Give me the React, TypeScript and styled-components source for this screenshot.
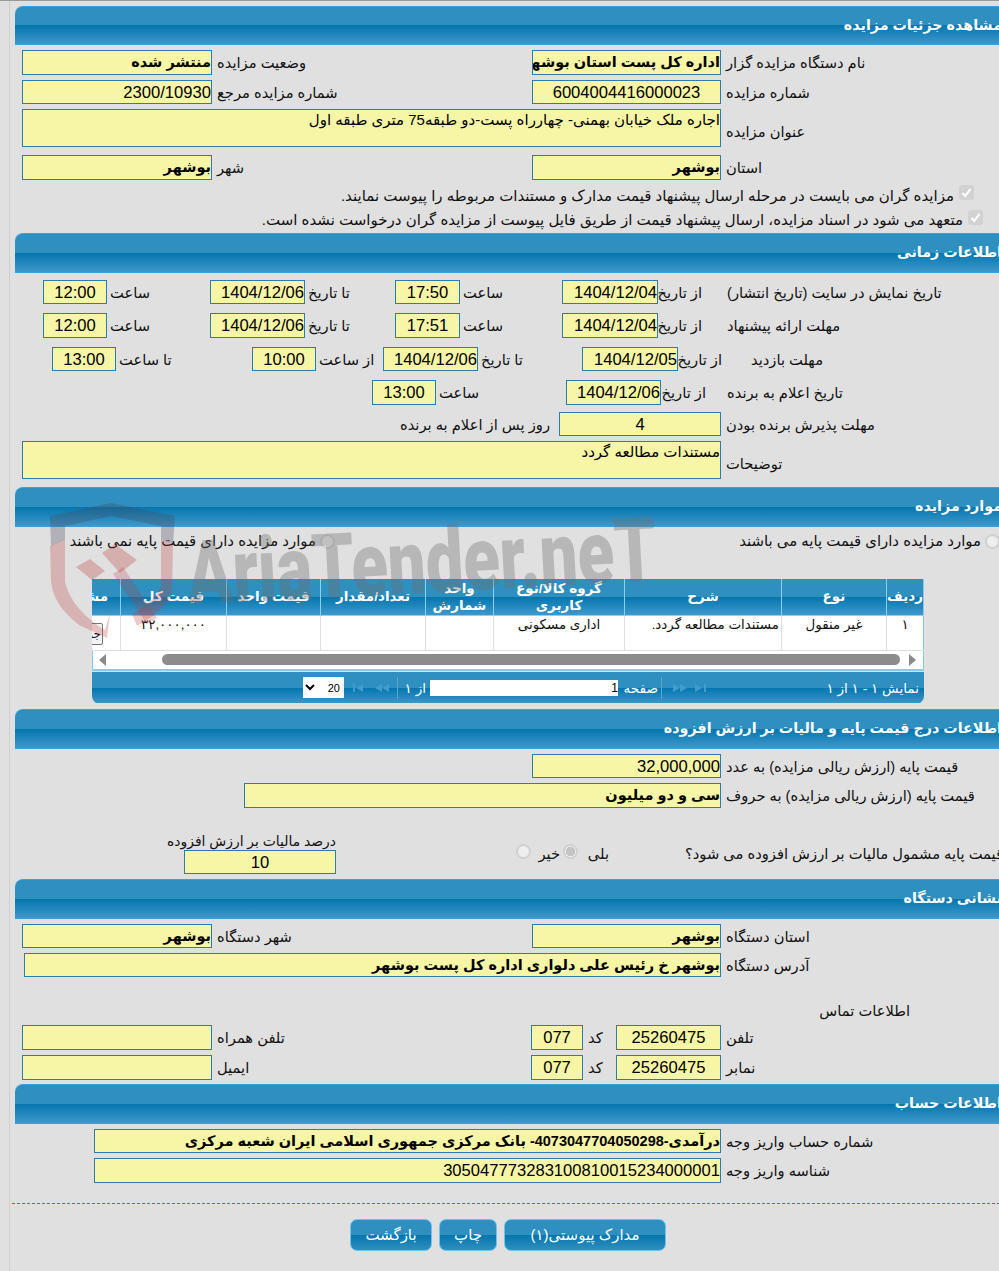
import React from "react";
import styled, { createGlobalStyle } from "styled-components";

const Global = createGlobalStyle`
  html, body { margin: 0; padding: 0; background: #e0e0e0; }
  body { font-family: "Liberation Sans", "DejaVu Sans", sans-serif; }
`;

const Page = styled.div`
  position: relative;
  width: 999px;
  height: 1271px;
  overflow: hidden;
  background: #e0e0e0;
  border-top: 1px solid #9a9a9a;
  box-sizing: border-box;
`;

const Main = styled.main`
  width: 1000px;
  margin-left: 9px;
  padding-left: 5px;
  height: 1270px;
  border-left: 1px solid #cfcfcf;
  direction: rtl;
  display: flex;
  flex-direction: column;
`;

const Header = styled.h2<{ $mt: number; $h?: number }>`
  box-sizing: border-box;
  flex: none;
  height: ${(p) => p.$h ?? 40}px;
  margin: ${(p) => p.$mt}px 0 0;
  padding: 0 13px 0 0;
  border-top: 1px solid #3a9fdf;
  border-bottom: 1px solid #3a9fdf;
  border-top-left-radius: 8px;
  background: linear-gradient(#2f8fbe 0%, #2f8fbe 50%, #0575ae 50%, #3e98cb 100%);
  color: #fff;
  font-size: 14.3px;
  font-weight: 700;
  line-height: 37px;
  white-space: nowrap;
`;

const Row = styled.div<{ $mt: number; $h: number; $pr?: number; $end?: boolean; $start?: boolean }>`
  flex: none;
  display: flex;
  height: ${(p) => p.$h}px;
  margin-top: ${(p) => p.$mt}px;
  padding-right: ${(p) => p.$pr ?? 0}px;
  align-items: ${(p) => (p.$end ? "flex-end" : p.$start ? "flex-start" : "center")};
`;

const Label = styled.span<{ $w: number; $pl?: number; $pr?: number; $right?: boolean; $pt?: number; $mb?: number }>`
  flex: none;
  box-sizing: border-box;
  width: ${(p) => p.$w}px;
  padding-left: ${(p) => p.$pl ?? 5}px;
  padding-right: ${(p) => p.$pr ?? 0}px;
  padding-top: ${(p) => p.$pt ?? 0}px;
  margin-bottom: ${(p) => p.$mb ?? 0}px;
  text-align: ${(p) => (p.$right ? "right" : "left")};
  font-size: 14.7px;
  color: #111;
  white-space: nowrap;
`;

const Box = styled.div<{ $w: number; $center?: boolean; $bold?: boolean; $tall?: boolean }>`
  flex: none;
  box-sizing: border-box;
  width: ${(p) => p.$w}px;
  height: 100%;
  background: #f7f5a6;
  border: 1px solid #2b7cb3;
  color: #000;
  overflow: hidden;
  white-space: nowrap;
  text-align: ${(p) => (p.$center ? "center" : "right")};
  font-size: ${(p) => (p.$bold ? "14.5px" : p.$tall ? "15px" : "16.6px")};
  font-weight: ${(p) => (p.$bold ? 700 : 400)};
  line-height: ${(p) => (p.$tall ? "20px" : "23px")};
`;

const CheckRow = styled(Row)`
  font-size: 15px;
  color: #111;
  line-height: 22px;
  white-space: nowrap;
`;

const Tick = styled.span<{ $mt: number }>`
  flex: none;
  width: 15px;
  height: 15px;
  margin: ${(p) => p.$mt}px 0 0 5px;
  border-radius: 3px;
  background: #d2d2d2;
  display: flex;
  align-items: center;
  justify-content: center;
`;

const RadioOption = styled.label<{ $w: number; $pr: number }>`
  flex: none;
  box-sizing: border-box;
  width: ${(p) => p.$w}px;
  padding-right: ${(p) => p.$pr}px;
  display: flex;
  align-items: center;
  gap: 4px;
  font-size: 14.9px;
  color: #111;
  white-space: nowrap;
`;

const RadioDot = styled.span<{ $on?: boolean }>`
  flex: none;
  box-sizing: border-box;
  width: 15px;
  height: 15px;
  border-radius: 50%;
  border: 2px solid #d0d0d0;
  background: ${(p) => (p.$on ? "radial-gradient(circle, #c4c4c4 0 4.5px, #eeeeee 5px)" : "#eeeeee")};
`;

const Grid = styled.div`
  flex: none;
  box-sizing: border-box;
  width: 832px;
  height: 124px;
  margin: 27px 91px 0 0;
  display: flex;
  flex-direction: column;
  overflow: hidden;
`;

const Table = styled.table`
  flex: none;
  width: 832px;
  table-layout: fixed;
  border-collapse: collapse;
  background: #fff;
  border-right: 1px solid #8cc8e8;
  border-left: 1px solid #8cc8e8;
`;

const Th = styled.th`
  box-sizing: border-box;
  height: 36px;
  padding: 0;
  background: linear-gradient(#2f8fbe 0%, #2f8fbe 50%, #0575ae 50%, #3e98cb 100%);
  border-left: 1px solid #8ad0f2;
  border-bottom: 1px solid #8ad0f2;
  color: #fff;
  font-size: 13.5px;
  font-weight: 700;
  line-height: 17px;
  text-align: center;
  overflow: hidden;
  white-space: normal;
`;

const ClippedTh = styled(Th)`
  padding-right: 12px;
  text-align: right;
  white-space: nowrap;
`;

const Td = styled.td<{ $right?: boolean }>`
  box-sizing: border-box;
  height: 35px;
  padding: 0 2px;
  border-left: 1px solid #dedede;
  border-bottom: 1px solid #dedede;
  vertical-align: top;
  font-size: 13.4px;
  line-height: 18px;
  color: #111;
  text-align: ${(p) => (p.$right ? "right" : "center")};
  overflow: hidden;
  white-space: nowrap;
`;

const MiniButton = styled.span`
  display: block;
  box-sizing: border-box;
  width: 40px;
  height: 22px;
  margin: 7px 15px 0 0;
  padding-right: 1px;
  border: 1px solid #777;
  border-radius: 2px;
  background: #f4f4f4;
  font-size: 12px;
  line-height: 20px;
  text-align: right;
`;

const ScrollBar = styled.div`
  flex: none;
  box-sizing: border-box;
  height: 20px;
  background: #fff;
  border-right: 1px solid #8cc8e8;
  border-left: 1px solid #8cc8e8;
  border-bottom: 2px solid #8cc8e8;
  display: flex;
  align-items: center;
  padding: 0 7px;
`;

const ScrollThumb = styled.div`
  flex: none;
  width: 738px;
  height: 11px;
  margin: 0 9px 0 auto;
  border-radius: 6px;
  background: #8c8c8c;
`;

const ArrowRight = styled.span`
  flex: none;
  border-style: solid;
  border-width: 6px 0 6px 7px;
  border-color: transparent transparent transparent #8a8a8a;
`;

const ArrowLeft = styled.span`
  flex: none;
  margin-right: 56px;
  border-style: solid;
  border-width: 6px 7px 6px 0;
  border-color: transparent #8a8a8a transparent transparent;
`;

const Pager = styled.div`
  flex: none;
  box-sizing: border-box;
  height: 32px;
  margin: 1px 0 0 0;
  padding: 0 5px 0 0;
  border-radius: 0 0 8px 8px;
  background: linear-gradient(#2f8fbe 0%, #2f8fbe 50%, #0575ae 50%, #3e98cb 100%);
  display: flex;
  align-items: center;
  color: #fff;
  font-size: 13.6px;
  white-space: nowrap;
`;

const PagerText = styled.span<{ $w: number }>`
  flex: none;
  width: ${(p) => p.$w}px;
`;

const PagerIcon = styled.svg<{ $ml: number }>`
  flex: none;
  display: block;
  margin-left: ${(p) => p.$ml}px;
`;

const PagerSep = styled.span<{ $mr: number; $ml: number }>`
  flex: none;
  width: 1px;
  height: 22px;
  margin: 0 ${(p) => p.$mr}px 0 ${(p) => p.$ml}px;
  background: #5aa5cf;
`;

const PagerInput = styled.div`
  flex: none;
  box-sizing: border-box;
  width: 188px;
  height: 16px;
  margin: 0 4px;
  background: #fff;
  color: #000;
  font-size: 12px;
  line-height: 16px;
`;

const PageSize = styled.select`
  flex: none;
  box-sizing: border-box;
  width: 41px;
  height: 21px;
  border: 0;
  border-radius: 0;
  background: #fff;
  color: #000;
  font: 11px "Liberation Sans", sans-serif;
`;

const Percent = styled.div`
  flex: none;
  width: 168px;
  margin-right: 180px;
  display: flex;
  flex-direction: column;
  height: 100%;
`;

const PercentLabel = styled.span`
  font-size: 13.9px;
  color: #111;
  line-height: 17px;
  white-space: nowrap;
  text-align: right;
`;

const PercentBox = styled(Box)`
  height: 24px;
`;

const Choice = styled.span<{ $w: number; $mr?: number }>`
  flex: none;
  width: ${(p) => p.$w}px;
  margin-right: ${(p) => p.$mr ?? 0}px;
  margin-bottom: 12px;
  font-size: 14.7px;
  color: #111;
  white-space: nowrap;
`;

const ChoiceDot = styled(RadioDot)<{ $mr?: number }>`
  margin: 0 ${(p) => p.$mr ?? 0}px 15px 0;
`;

const ContactTitle = styled.div`
  flex: none;
  height: 20px;
  margin-top: 24px;
  padding-right: 105px;
  font-size: 14.7px;
  line-height: 20px;
  color: #111;
`;

const Dashed = styled.hr`
  flex: none;
  width: 1003px;
  margin: 20px 0 0 -3px;
  border: 0;
  border-top: 1px dashed #1f84c8;
`;

const Actions = styled.div`
  flex: none;
  display: flex;
  gap: 7px;
  height: 32px;
  margin-top: 15px;
  padding-right: 349px;
`;

const Action = styled.button<{ $w: number }>`
  box-sizing: border-box;
  width: ${(p) => p.$w}px;
  height: 32px;
  padding: 0;
  border: 1px solid #6cc4ee;
  border-radius: 7px;
  background: linear-gradient(#2f8fbe 0%, #2f8fbe 50%, #0575ae 50%, #2f8fbe 100%);
  color: #fff;
  font: 15px "Liberation Sans", "DejaVu Sans", sans-serif;
  direction: rtl;
`;

const Mark = styled.div`
  position: absolute;
  left: 45px;
  top: 495px;
  width: 620px;
  height: 160px;
  pointer-events: none;
`;

const MarkShield = styled.svg`
  position: absolute;
  left: 0;
  top: 0;
`;

const MarkText = styled.span`
  position: absolute;
  left: 142px;
  top: 34px;
  font-family: Roboto, "Liberation Sans", sans-serif;
  font-size: 90px;
  font-weight: 900;
  line-height: 90px;
  color: rgba(110, 110, 110, 0.36);
  white-space: nowrap;
  direction: ltr;
  transform-origin: left center;
  transform: rotate(-3deg) scaleX(0.745);
`;

const PagerGlyph = ({ d, ml = 0 }: { d: string; ml?: number }) => (
  <PagerIcon $ml={ml} width="16" height="10" viewBox="0 0 16 10" aria-hidden="true">
    <path d={d} fill="#3f9ccd" />
  </PagerIcon>
);

const TickMark = () => (
  <svg width="11" height="11" viewBox="0 0 11 11" aria-hidden="true">
    <path d="M1.5 6 4.3 9 9.5 1.8" stroke="#fff" strokeWidth="2" fill="none" />
  </svg>
);

const columns = [37, 105, 157, 131, 68, 105, 94, 106, 29];

export default function App() {
  return (
    <Page>
      <Global />
      <Main>
        <Header $mt={5} $h={39}>مشاهده جزئیات مزایده</Header>
        <Row $mt={5} $h={25}>
          <Label $w={294}>نام دستگاه مزایده گزار</Label>
          <Box $w={189} $bold>اداره کل پست استان بوشهر</Box>
          <Label $w={320}>وضعیت مزایده</Label>
          <Box $w={190} $bold>منتشر شده</Box>
        </Row>
        <Row $mt={5} $h={24}>
          <Label $w={294}>شماره مزایده</Label>
          <Box $w={189} $center>6004004416000023</Box>
          <Label $w={320}>شماره مزایده مرجع</Label>
          <Box $w={190}>2300/10930</Box>
        </Row>
        <Row $mt={5} $h={38}>
          <Label $w={294} $pt={6}>عنوان مزایده</Label>
          <Box $w={699} $tall>اجاره ملک خیابان بهمنی- چهارراه پست-دو طبقه75 متری طبقه اول</Box>
        </Row>
        <Row $mt={8} $h={25}>
          <Label $w={294}>استان</Label>
          <Box $w={189} $bold>بوشهر</Box>
          <Label $w={320}>شهر</Label>
          <Box $w={190} $bold>بوشهر</Box>
        </Row>
        <CheckRow $mt={5} $h={22} $pr={41} $start>
          <Tick $mt={0}><TickMark /></Tick>
          <span>مزایده گران می بایست در مرحله ارسال پیشنهاد قیمت مدارک و مستندات مربوطه را پیوست نمایند.</span>
        </CheckRow>
        <CheckRow $mt={2} $h={22} $pr={32} $start>
          <Tick $mt={1}><TickMark /></Tick>
          <span>متعهد می شود در اسناد مزایده، ارسال پیشنهاد قیمت از طریق فایل پیوست از مزایده گران درخواست نشده است.</span>
        </CheckRow>

        <Header $mt={2}>اطلاعات زمانی</Header>
        <Row $mt={7} $h={24}>
          <Label $w={313} $pl={25}>تاریخ نمایش در سایت (تاریخ انتشار)</Label>
          <Label $w={44} $pl={3}>از تاریخ</Label>
          <Box $w={96}>1404/12/04</Box>
          <Label $w={102} $pl={3}>ساعت</Label>
          <Box $w={65} $center>17:50</Box>
          <Label $w={90} $pl={3}>تا تاریخ</Label>
          <Box $w={95}>1404/12/06</Box>
          <Label $w={103} $pl={3}>ساعت</Label>
          <Box $w={64} $center>12:00</Box>
        </Row>
        <Row $mt={9} $h={25}>
          <Label $w={313} $pl={25}>مهلت ارائه پیشنهاد</Label>
          <Label $w={44} $pl={3}>از تاریخ</Label>
          <Box $w={96}>1404/12/04</Box>
          <Label $w={102} $pl={3}>ساعت</Label>
          <Box $w={65} $center>17:51</Box>
          <Label $w={90} $pl={3}>تا تاریخ</Label>
          <Box $w={95}>1404/12/06</Box>
          <Label $w={103} $pl={3}>ساعت</Label>
          <Box $w={64} $center>12:00</Box>
        </Row>
        <Row $mt={9} $h={24}>
          <Label $w={293} $pl={29}>مهلت بازدید</Label>
          <Label $w={44} $pl={3}>از تاریخ</Label>
          <Box $w={96}>1404/12/05</Box>
          <Label $w={104} $pl={3}>تا تاریخ</Label>
          <Box $w={95}>1404/12/06</Box>
          <Label $w={67} $pl={3}>از ساعت</Label>
          <Box $w={64} $center>10:00</Box>
          <Label $w={136} $pl={3}>تا ساعت</Label>
          <Box $w={64} $center>13:00</Box>
        </Row>
        <Row $mt={9} $h={25}>
          <Label $w={309} $pl={21}>تاریخ اعلام به برنده</Label>
          <Label $w={45} $pl={3}>از تاریخ</Label>
          <Box $w={95}>1404/12/06</Box>
          <Label $w={130} $pl={3}>ساعت</Label>
          <Box $w={64} $center>13:00</Box>
        </Row>
        <Row $mt={7} $h={24}>
          <Label $w={294}>مهلت پذیرش برنده بودن</Label>
          <Box $w={162} $center>4</Box>
          <Label $w={200} $right $pr={9} $pl={0}>روز پس از اعلام به برنده</Label>
        </Row>
        <Row $mt={5} $h={38}>
          <Label $w={294} $pt={6}>توضیحات</Label>
          <Box $w={699} $tall>مستندات مطالعه گردد</Box>
        </Row>

        <Header $mt={8}>موارد مزایده</Header>
        <Row $mt={3} $h={22}>
          <RadioOption $w={680} $pr={15}>
            <RadioDot />
            <span>موارد مزایده دارای قیمت پایه می باشند</span>
          </RadioOption>
          <RadioOption $w={300} $pr={0}>
            <RadioDot />
            <span>موارد مزایده دارای قیمت پایه نمی باشند</span>
          </RadioOption>
        </Row>
        <Grid>
          <Table>
            <colgroup>
              {columns.map((w, i) => (
                <col key={i} style={{ width: w }} />
              ))}
            </colgroup>
            <thead>
              <tr>
                <Th>ردیف</Th>
                <Th>نوع</Th>
                <Th>شرح</Th>
                <Th>گروه کالا/نوع کاربری</Th>
                <Th>واحد شمارش</Th>
                <Th>تعداد/مقدار</Th>
                <Th>قیمت واحد</Th>
                <Th>قیمت کل</Th>
                <ClippedTh>مشاهده</ClippedTh>
              </tr>
            </thead>
            <tbody>
              <tr>
                <Td>۱</Td>
                <Td>غیر منقول</Td>
                <Td $right>مستندات مطالعه گردد.</Td>
                <Td>اداری مسکونی</Td>
                <Td />
                <Td />
                <Td />
                <Td>۳۲,۰۰۰,۰۰۰</Td>
                <Td><MiniButton>جزئیات</MiniButton></Td>
              </tr>
            </tbody>
          </Table>
          <ScrollBar>
            <ArrowRight />
            <ScrollThumb />
            <ArrowLeft />
          </ScrollBar>
          <Pager>
            <PagerText $w={209}>نمایش ۱ - ۱ از ۱</PagerText>
            <PagerGlyph ml={6} d="M1 1l7 4-7 4zM10 1h2v8h-2z" />
            <PagerGlyph d="M1 1l7 4-7 4zM8 1l7 4-7 4z" />
            <PagerSep $mr={10} $ml={3} />
            <PagerText $w={36}>صفحه</PagerText>
            <PagerInput>1</PagerInput>
            <PagerText $w={21}>از ۱</PagerText>
            <PagerSep $mr={7} $ml={7} />
            <PagerGlyph ml={9} d="M8 1 1 5l7 4zM15 1 8 5l7 4z" />
            <PagerGlyph ml={5} d="M4 1h2v8H4zM14 1 7 5l7 4z" />
            <PageSize defaultValue="20" aria-label="20"><option>20</option></PageSize>
          </Pager>
        </Grid>

        <Header $mt={6}>اطلاعات درج قیمت پایه و مالیات بر ارزش افزوده</Header>
        <Row $mt={5} $h={24}>
          <Label $w={294}>قیمت پایه (ارزش ریالی مزایده) به عدد</Label>
          <Box $w={189}>32,000,000</Box>
        </Row>
        <Row $mt={5} $h={25}>
          <Label $w={294}>قیمت پایه (ارزش ریالی مزایده) به حروف</Label>
          <Box $w={477} $bold>سی و دو میلیون</Box>
        </Row>
        <Row $mt={25} $h={41} $end>
          <Label $w={335} $mb={12}>قیمت پایه مشمول مالیات بر ارزش افزوده می شود؟</Label>
          <Choice $w={24} $mr={71}>بلی</Choice>
          <ChoiceDot $on $mr={7} />
          <Choice $w={21} $mr={3}>خیر</Choice>
          <ChoiceDot $mr={8} />
          <Percent>
            <PercentLabel>درصد مالیات بر ارزش افزوده</PercentLabel>
            <PercentBox $w={152} $center>10</PercentBox>
          </Percent>
        </Row>

        <Header $mt={5}>نشانی دستگاه</Header>
        <Row $mt={5} $h={24}>
          <Label $w={294}>استان دستگاه</Label>
          <Box $w={189} $bold>بوشهر</Box>
          <Label $w={320}>شهر دستگاه</Label>
          <Box $w={190} $bold>بوشهر</Box>
        </Row>
        <Row $mt={5} $h={24}>
          <Label $w={294}>آدرس دستگاه</Label>
          <Box $w={697} $bold>بوشهر خ رئیس علی دلواری اداره کل پست بوشهر</Box>
        </Row>
        <ContactTitle>اطلاعات تماس</ContactTitle>
        <Row $mt={4} $h={25}>
          <Label $w={294}>تلفن</Label>
          <Box $w={105} $center>25260475</Box>
          <Label $w={33}>کد</Label>
          <Box $w={52} $center>077</Box>
          <Label $w={319}>تلفن همراه</Label>
          <Box $w={190} />
        </Row>
        <Row $mt={5} $h={25}>
          <Label $w={294}>نمابر</Label>
          <Box $w={105} $center>25260475</Box>
          <Label $w={33}>کد</Label>
          <Box $w={52} $center>077</Box>
          <Label $w={319}>ایمیل</Label>
          <Box $w={190} />
        </Row>

        <Header $mt={4}>اطلاعات حساب</Header>
        <Row $mt={5} $h={24}>
          <Label $w={294}>شماره حساب واریز وجه</Label>
          <Box $w={627} $bold>درآمدی-4073047704050298- بانک مرکزی جمهوری اسلامی ایران شعبه مرکزی</Box>
        </Row>
        <Row $mt={5} $h={25}>
          <Label $w={294}>شناسه واریز وجه</Label>
          <Box $w={627}>305047773283100810015234000001</Box>
        </Row>
        <Dashed />
        <Actions>
          <Action $w={162}>مدارک پیوستی(۱)</Action>
          <Action $w={58}>چاپ</Action>
          <Action $w={82}>بازگشت</Action>
        </Actions>
      </Main>
      <Mark aria-hidden="true">
        <MarkShield width="140" height="160" viewBox="0 0 140 160">
          <path d="M5 20 66 7 130 20 128 48 116 44 116 30 66 20 20 30 20 44 6 50Z" fill="rgba(70,70,90,.3)" />
          <path d="M5 50 20 44 20 85C24 105 40 122 60 134L65 117 62 142 34 129C16 115 7 100 6 85Z" fill="rgba(190,60,60,.28)" />
          <path d="M116 44 128 48 127 95C123 112 105 122 92 130L87 118C100 110 112 102 116 90Z" fill="rgba(190,60,60,.28)" />
          <path d="M57 57 70 48 92 64 75 77ZM31 71 45 63 60 75 47 84Z" fill="rgba(190,60,60,.3)" />
          <path d="M68 78 78 71 112 122 102 128Z" fill="rgba(190,60,60,.24)" />
        </MarkShield>
        <MarkText>AriaTender.neT</MarkText>
      </Mark>
    </Page>
  );
}
